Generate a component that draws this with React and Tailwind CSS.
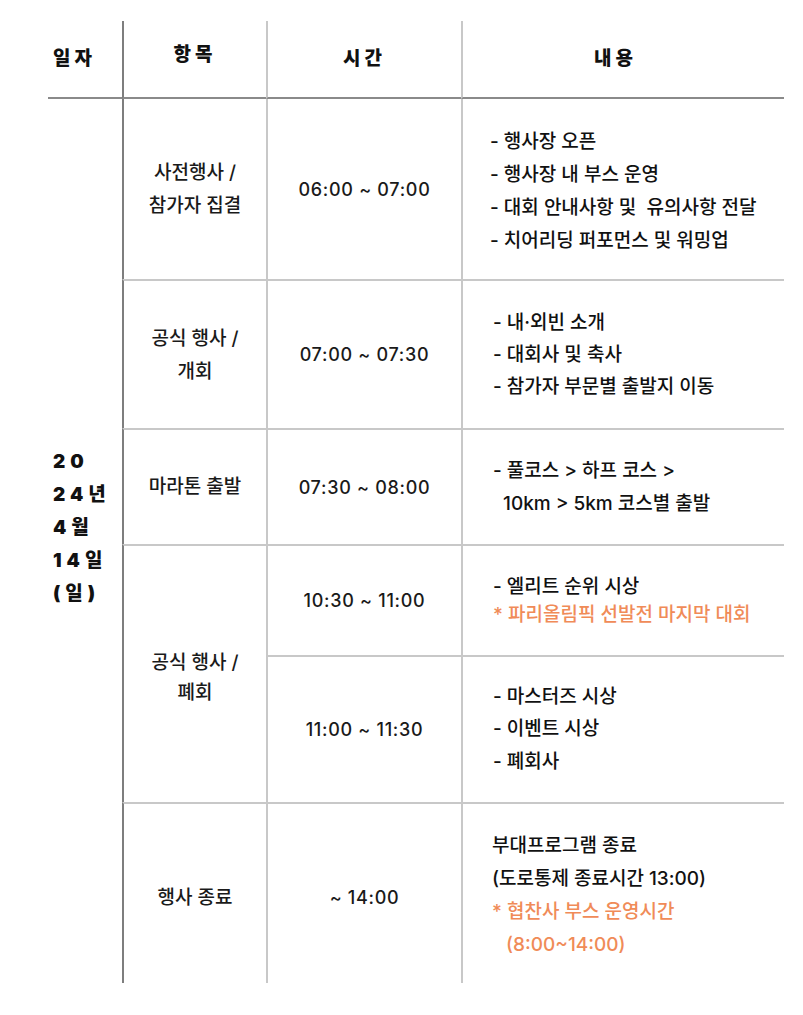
import React from "react";

const ff = { fontFamily: 'Inter, "Noto Sans CJK KR", sans-serif' };

function Lines({ items, className = "" }) {
  return (
    <div className={"flex flex-col " + className}>
      {items.map((it, i) => (
        <div key={i} className={"whitespace-pre " + (it.cls || "")}>
          {it.t}
        </div>
      ))}
    </div>
  );
}

export default function App() {
  const orange = "text-[#f08b58]";
  const time = "flex items-center justify-center text-[18px] font-medium tracking-[0.7px] text-[#1a1a1a]";
  const item = "flex items-center justify-center text-center text-[19px] font-medium text-[#1a1a1a]";
  const content = "flex items-center text-[19px] font-medium text-[#111]";
  return (
    <div
      className="w-[803px] h-[1015px] bg-white text-[#111] pt-[21px] pl-[48px]"
      style={ff}
    >
      <div className="grid w-[736px] grid-cols-[74px_144px_195px_323px] grid-rows-[78px_180px_149px_116px_111px_147px_181px]">
        {/* header */}
        <div className="border-b-2 border-[#8a8a8a] flex items-center pl-[5px] text-[19px] font-black tracking-[4px]">
          일자
        </div>
        <div className="border-b-2 border-l-2 border-b-[#8a8a8a] border-l-[#7e7e7e] flex items-center justify-center text-[19px] font-black tracking-[4px] pb-[8px]">
          항목
        </div>
        <div className="border-b-2 border-l-2 border-b-[#8a8a8a] border-l-[#c8c8c8] flex items-center justify-center text-[19px] font-black tracking-[4px]">
          시간
        </div>
        <div className="border-b-2 border-l-2 border-b-[#8a8a8a] border-l-[#c8c8c8] flex items-center justify-center text-[19px] font-black tracking-[4px] pr-[16px]">
          내용
        </div>

        {/* date column */}
        <div className="row-span-6 flex items-center pl-[5px] pb-[27px]">
          <div className="flex flex-col text-[19px] font-black leading-[33px] tracking-[5px]">
            <div>20</div>
            <div>24년</div>
            <div>4월</div>
            <div>14일</div>
            <div>(일)</div>
          </div>
        </div>

        {/* row 1 */}
        <div className={"border-l-2 border-[#7e7e7e] leading-[33px] " + item}>
          <div>
            사전행사 /<br />참가자 집결
          </div>
        </div>
        <div className={"border-l-2 border-[#c8c8c8] " + time}>06:00 ~ 07:00</div>
        <div className={"border-l-2 border-[#c8c8c8] pl-[27px] pt-[3px] leading-[33px] " + content}>
          <Lines
            items={[
              { t: "- 행사장 오픈" },
              { t: "- 행사장 내 부스 운영" },
              { t: "- 대회 안내사항 및  유의사항 전달" },
              { t: "- 치어리딩 퍼포먼스 및 워밍업" },
            ]}
          />
        </div>

        {/* row 2 */}
        <div className={"border-l-2 border-t-2 border-l-[#7e7e7e] border-t-[#c8c8c8] leading-[33px] " + item}>
          <div>
            공식 행사 /<br />개회
          </div>
        </div>
        <div className={"border-l-2 border-t-2 border-[#c8c8c8] " + time}>07:00 ~ 07:30</div>
        <div className={"border-l-2 border-t-2 border-[#c8c8c8] pl-[30px] leading-[32px] " + content}>
          <Lines
            items={[
              { t: "- 내·외빈 소개" },
              { t: "- 대회사 및 축사" },
              { t: "- 참가자 부문별 출발지 이동" },
            ]}
          />
        </div>

        {/* row 3 */}
        <div className={"border-l-2 border-t-2 border-l-[#7e7e7e] border-t-[#c8c8c8] " + item}>
          마라톤 출발
        </div>
        <div className={"border-l-2 border-t-2 border-[#c8c8c8] " + time}>07:30 ~ 08:00</div>
        <div className={"border-l-2 border-t-2 border-[#c8c8c8] pl-[30px] leading-[33px] " + content}>
          <Lines
            items={[
              { t: "- 풀코스 > 하프 코스 >" },
              { t: "10km > 5km 코스별 출발", cls: "pl-[10px]" },
            ]}
          />
        </div>

        {/* row 4 (merged item) */}
        <div className={"row-span-2 border-l-2 border-t-2 border-l-[#7e7e7e] border-t-[#c8c8c8] leading-[30px] pt-[8px] " + item}>
          <div>
            공식 행사 /<br />폐회
          </div>
        </div>
        <div className={"border-l-2 border-t-2 border-[#c8c8c8] " + time}>10:30 ~ 11:00</div>
        <div className={"border-l-2 border-t-2 border-[#c8c8c8] pl-[30px] leading-[28px] " + content}>
          <Lines
            items={[
              { t: "- 엘리트 순위 시상" },
              { t: "* 파리올림픽 선발전 마지막 대회", cls: orange },
            ]}
          />
        </div>
        <div className={"border-l-2 border-t-2 border-[#c8c8c8] " + time}>11:00 ~ 11:30</div>
        <div className={"border-l-2 border-t-2 border-[#c8c8c8] pl-[30px] leading-[32.5px] " + content}>
          <Lines
            items={[
              { t: "- 마스터즈 시상" },
              { t: "- 이벤트 시상" },
              { t: "- 폐회사" },
            ]}
          />
        </div>

        {/* row 5 */}
        <div className={"border-l-2 border-t-2 border-l-[#7e7e7e] border-t-[#c8c8c8] pt-[9px] " + item}>
          행사 종료
        </div>
        <div className={"border-l-2 border-t-2 border-[#c8c8c8] pt-[8px] " + time}>~ 14:00</div>
        <div className={"border-l-2 border-t-2 border-[#c8c8c8] pl-[29px] leading-[33px] pt-[3px] " + content}>
          <Lines
            items={[
              { t: "부대프로그램 종료" },
              { t: "(도로통제 종료시간 13:00)" },
              { t: "* 협찬사 부스 운영시간", cls: orange },
              { t: "(8:00~14:00)", cls: orange + " pl-[14px]" },
            ]}
          />
        </div>
      </div>
    </div>
  );
}
